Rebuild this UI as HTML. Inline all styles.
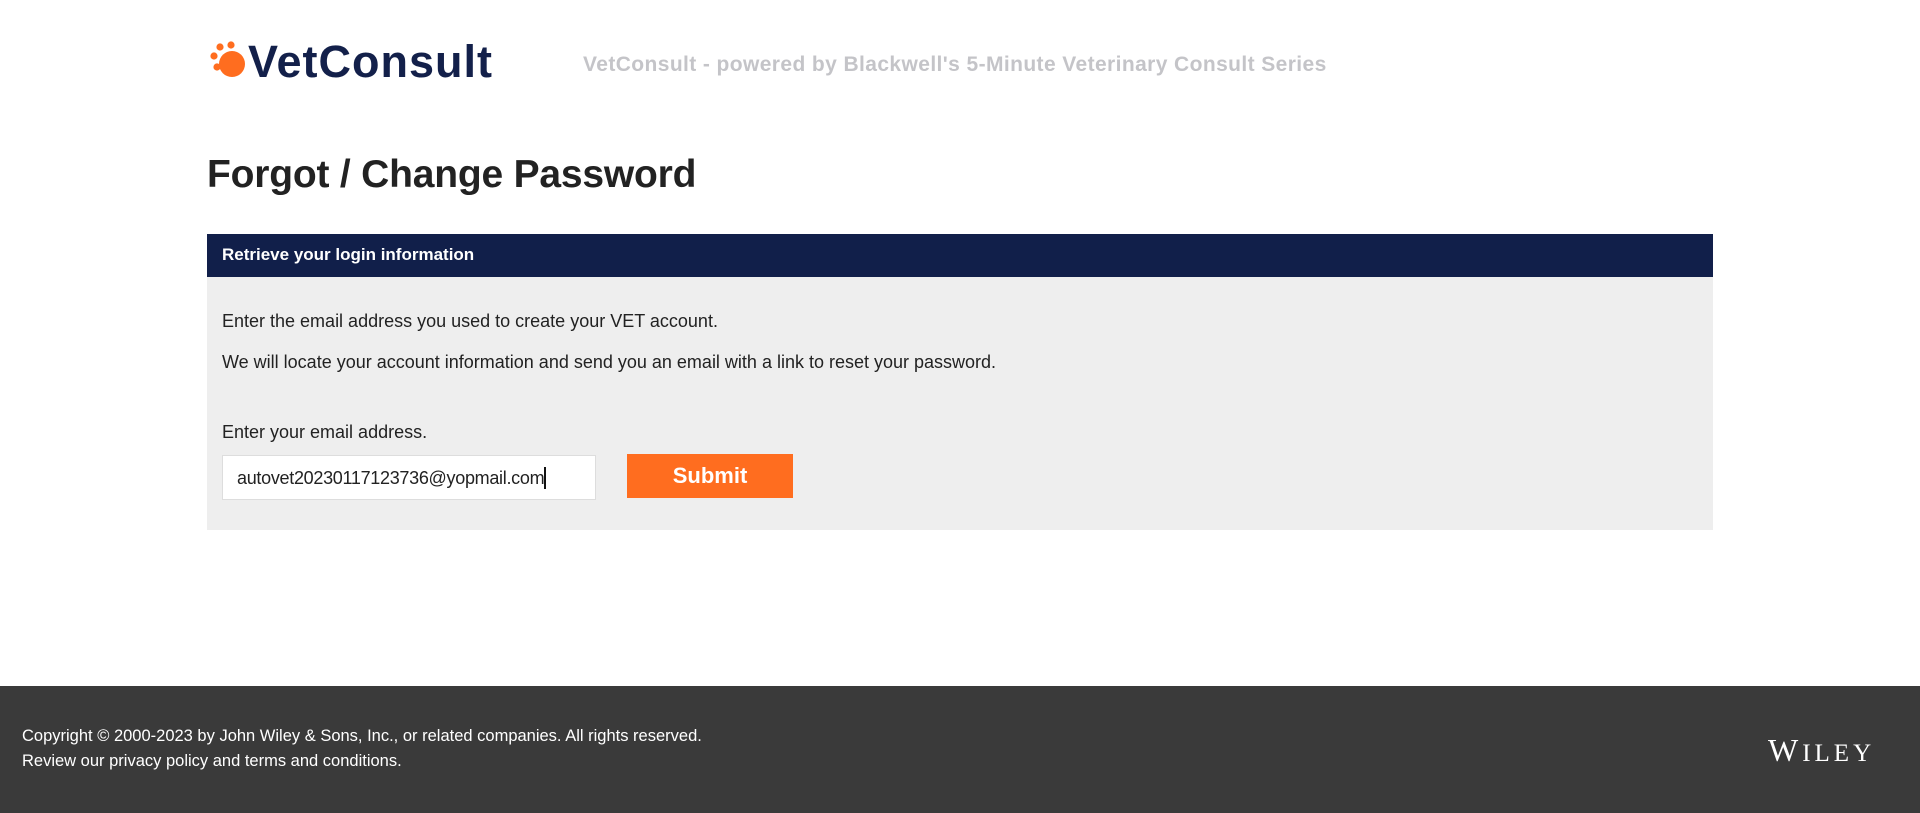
<!DOCTYPE html>
<html><head><meta charset="utf-8"><style>
*{margin:0;padding:0;box-sizing:border-box}
body{width:1920px;height:813px;background:#fff;font-family:"Liberation Sans",sans-serif;position:relative;overflow:hidden;color:#222}
.abs{position:absolute}
.logo{top:36px;font-size:45px;font-weight:bold;color:#13204a;letter-spacing:1px;left:248px}
.tag{left:583px;top:53px;font-size:21px;font-weight:bold;color:#c4c4c8;letter-spacing:0.4px}
h1{position:absolute;left:207px;top:153px;font-size:39px;font-weight:bold;color:#222;letter-spacing:-0.2px}
.bar{left:207px;top:234px;width:1506px;height:43px;background:#111f4a;color:#fff;font-weight:bold;font-size:17px;padding:11px 0 0 15px}
.box{left:207px;top:277px;width:1506px;height:253px;background:#eeeeee}
.t{left:222px;font-size:18px;color:#222}
.inp{left:222px;top:455px;width:374px;height:45px;background:#fff;border:1px solid #ddd;font-size:18px;padding:11px 0 0 14px;color:#222;letter-spacing:-0.3px}
.btn{left:627px;top:454px;width:166px;height:44px;background:#ff6d1f;color:#fff;font-weight:bold;font-size:22px;text-align:center;line-height:44px}
.foot{left:0;top:686px;width:1920px;height:127px;background:#3a3a3a}
.ft{left:22px;color:#fff;font-size:16.5px}
.wiley{left:1768px;top:732px;color:#fff;font-family:"Liberation Serif",serif;font-size:32px;letter-spacing:4px}
</style></head><body>
<svg class="abs" style="left:209px;top:40px" width="40" height="40" viewBox="0 0 40 40">
<circle cx="5" cy="16" r="3.6" fill="#ff6d1f"/><circle cx="11" cy="7" r="3.6" fill="#ff6d1f"/><circle cx="22" cy="5" r="3.6" fill="#ff6d1f"/><circle cx="8" cy="27" r="3.6" fill="#ff6d1f"/><circle cx="23" cy="24" r="13" fill="#ff6d1f"/></svg>
<div class="abs logo">VetConsult</div>
<div class="abs tag">VetConsult - powered by Blackwell's 5-Minute Veterinary Consult Series</div>
<h1>Forgot / Change Password</h1>
<div class="abs bar">Retrieve your login information</div>
<div class="abs box"></div>
<div class="abs t" style="top:311px">Enter the email address you used to create your VET account.</div>
<div class="abs t" style="top:352px">We will locate your account information and send you an email with a link to reset your password.</div>
<div class="abs t" style="top:422px">Enter your email address.</div>
<div class="abs inp">autovet20230117123736@yopmail.com<span style="display:inline-block;width:2px;height:22px;background:#111;vertical-align:-5px"></span></div>
<div class="abs btn">Submit</div>
<div class="abs foot"></div>
<div class="abs ft" style="top:727px">Copyright © 2000-2023 by John Wiley &amp; Sons, Inc., or related companies. All rights reserved.</div>
<div class="abs ft" style="top:752px">Review our privacy policy and terms and conditions.</div>
<div class="abs wiley">W<span style="font-size:25px">ILEY</span></div>
</body></html>
